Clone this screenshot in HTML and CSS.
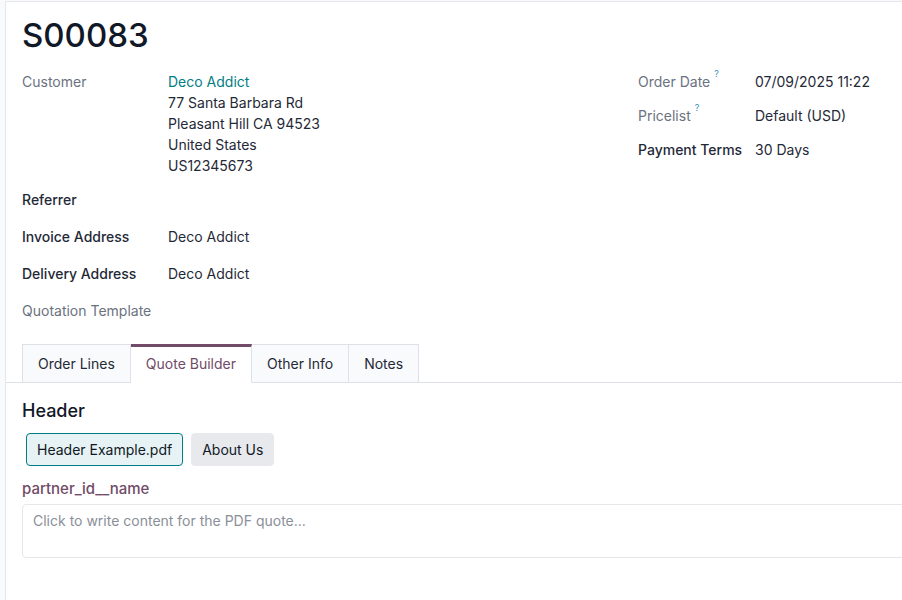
FILE: index.html
```html
<!DOCTYPE html>
<html lang="en">
<head>
    <meta charset="UTF-8">
    <meta name="viewport" content="width=device-width, initial-scale=1.0">
    <title>S00083</title>
    <link rel="stylesheet" href="styles.css">
</head>
<body>
    <div class="sheet">
        <h1 class="record-name">S00083</h1>

        <div class="groups">
            <div class="group">
                <div class="field">
                    <div class="label muted">Customer</div>
                    <div class="value">
                        <a class="link" href="#">Deco Addict</a><br>
                        77 Santa Barbara Rd<br>
                        Pleasant Hill CA 94523<br>
                        United States<br>
                        US12345673
                    </div>
                </div>
                <div class="field spaced">
                    <div class="label strong">Referrer</div>
                    <div class="value"></div>
                </div>
                <div class="field spaced">
                    <div class="label strong">Invoice Address</div>
                    <div class="value">Deco Addict</div>
                </div>
                <div class="field spaced">
                    <div class="label strong">Delivery Address</div>
                    <div class="value">Deco Addict</div>
                </div>
                <div class="field spaced">
                    <div class="label muted">Quotation Template</div>
                    <div class="value"></div>
                </div>
            </div>

            <div class="group group-right">
                <div class="field">
                    <div class="label muted">Order Date <sup class="help">?</sup></div>
                    <div class="value">07/09/2025 11:22</div>
                </div>
                <div class="field">
                    <div class="label muted">Pricelist <sup class="help">?</sup></div>
                    <div class="value">Default (USD)</div>
                </div>
                <div class="field">
                    <div class="label strong">Payment Terms</div>
                    <div class="value">30 Days</div>
                </div>
            </div>
        </div>

        <!-- onglets -->
        <div class="tabs">
            <div class="tab">Order Lines</div>
            <div class="tab active">Quote Builder</div>
            <div class="tab">Other Info</div>
            <div class="tab">Notes</div>
        </div>

        <div class="tab-content">
            <h3 class="section-title">Header</h3>
            <div class="docs">
                <div class="doc selected">Header Example.pdf</div>
                <div class="doc">About Us</div>
            </div>
            <div class="dyn-label">partner_id__name</div>
            <div class="editor">Click to write content for the PDF quote...</div>
        </div>
    </div>
</body>
</html>
```

FILE: styles.css
```css
body {
    margin: 0;
    background-color: #f9fafb;
    font-family: Inter, 'Noto Sans', sans-serif;
    font-size: 14px;
    line-height: 21px;
    color: #1f2937;
    overflow: hidden;
    height: 600px;
}
.sheet {
    margin: 1px 0 0 5px;
    width: 1300px;
    min-height: 620px;
    background-color: #fff;
    border: 1px solid #e5e7eb;
    padding: 0 0 0 16px;
}
.record-name {
    margin: 0;
    padding-top: 13px;
    font-size: 33px;
    line-height: 40px;
    font-weight: 500;
    color: #111827;
}
.groups {
    display: grid;
    grid-template-columns: 616px 560px;
    margin-top: 16px;
}
.field {
    display: flex;
    margin-bottom: 13px;
}
.field.spaced {
    margin-bottom: 16px;
}
.label {
    width: 146px;
    flex-shrink: 0;
}
.group-right .label {
    width: 117px;
}
.label.muted {
    color: #6b7280;
}
.label.strong {
    color: #1f2937;
    font-weight: 500;
}
.value {
    min-height: 21px;
}
.help {
    color: #3a8fb7;
    font-size: 9px;
    vertical-align: top;
    line-height: 12px;
    position: relative;
    top: -3px;
}
.link {
    color: #017e84;
    text-decoration: none;
}
.tabs {
    display: flex;
    margin-top: 7px;
    margin-left: -16px;
    padding-left: 16px;
    border-bottom: 1px solid #dee2e6;
}
.tab {
    padding: 8px 15px;
    margin-bottom: -1px;
    background-color: #f9fafb;
    border: 1px solid #dee2e6;
    border-left: none;
    height: 21px;
}
.tab:first-child {
    border-left: 1px solid #dee2e6;
}
.tab.active {
    background-color: #fff;
    color: #714b67;
    border-top: 3px solid #714b67;
    border-bottom-color: #fff;
    padding-top: 6px;
}
.tab-content {
    padding-top: 16px;
}
.section-title {
    margin: 0;
    font-size: 18px;
    line-height: 24px;
    font-weight: 500;
    color: #111827;
}
.docs {
    display: flex;
    gap: 8px;
    margin: 10px 0 0 4px;
}
.doc {
    padding: 5px 10px;
    background-color: #e7e9ed;
    border: 1px solid #e7e9ed;
    border-radius: 4px;
    color: #111827;
}
.doc.selected {
    background-color: #e6f2f3;
    border-color: #017e84;
}
.dyn-label {
    margin-top: 12px;
    color: #714b67;
    font-size: 15px;
    font-weight: 500;
}
.editor {
    margin-top: 5px;
    height: 42px;
    padding: 5px 10px;
    border: 1px solid #e5e7eb;
    border-radius: 4px;
    color: #8a8f98;
}
```
